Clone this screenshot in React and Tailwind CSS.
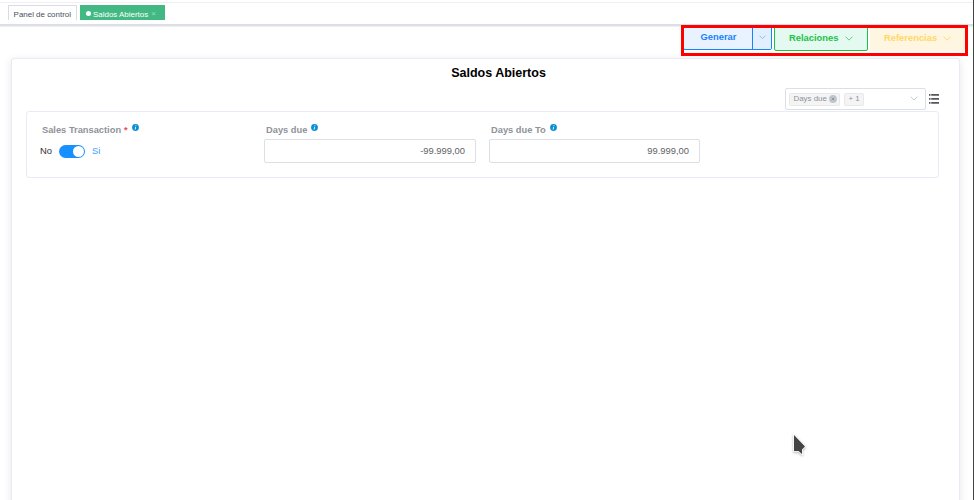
const FONT = 'font-["Liberation_Sans",Arial,sans-serif]';

function Chevron({ className }) {
  return (
    <svg viewBox="0 0 8 5" className={className} fill="none" stroke="currentColor" strokeWidth="0.9">
      <path d="M0.6 0.7 L4 4.1 L7.4 0.7" />
    </svg>
  );
}

function InfoIcon() {
  return (
    <svg viewBox="0 0 7 7" className="h-[7px] w-[7px] shrink-0">
      <circle cx="3.5" cy="3.5" r="3.4" fill="#0a8fd6" />
      <path d="M3.9 1.3 L3.8 2.1 M3.6 2.9 L3.2 5.5" stroke="#fff" strokeWidth="0.9" />
    </svg>
  );
}

function Label({ text, required }) {
  return (
    <div className="flex h-[12px] items-start pl-[2px] text-[9.3px] leading-[13px] font-bold text-[#909399]">
      <span className="whitespace-nowrap">{text}</span>
      {required && <span className="ml-[3px] text-[#f5455c]">*</span>}
      <span className="ml-[4px]">
        <InfoIcon />
      </span>
    </div>
  );
}

function TabsBar() {
  return (
    <div className="flex h-[23px] shrink-0 gap-[3px] border-b-2 border-[#dcdfe6] pt-[2px] pl-[8px] text-[7.95px] leading-[18px] shadow-[0_1px_1px_#f0f0f2]">
      <div className="h-[15px] w-[69px] border border-b-0 border-[#d8dce5] pl-[4.6px] whitespace-nowrap text-[#495060]">
        Panel de control
      </div>
      <div className="flex h-[15px] w-[85px] bg-[#42b983] pl-[6px] whitespace-nowrap text-white">
        <span className="mt-[6px] mr-[2px] h-[5px] w-[5px] rounded-full bg-white" />
        <span className="pt-[1px]">Saldos Abiertos</span>
        <span className="ml-[3px] text-[8px] text-[#a5dfc5]">×</span>
      </div>
    </div>
  );
}

function Actions() {
  return (
    <div className="relative flex h-[33px] shrink-0 pl-[683px] text-[9.4px] font-bold">
      <div className="flex h-[24px] w-[89px] rounded-[2px] border border-[#1682ff] bg-[#e8f3ff] text-[#1682ff]">
        <span className="w-[69px] border-r border-[#1682ff] pl-[1px] text-center leading-[19px]">Generar</span>
        <span className="flex flex-1 items-center justify-center bg-[#e2efff] pb-[2px] text-[#6fb1fb]">
          <Chevron className="h-[4.4px] w-[7px]" />
        </span>
      </div>
      <div className="ml-[2px] flex h-[25px] w-[94px] items-center rounded-[2px] border border-[#1dc149] bg-[#e4f9ef] pl-[14px] text-[#1dc149]">
        Relaciones
        <Chevron className="mb-[1px] ml-[6px] h-[5px] w-[8px] text-[#4fce72]" />
      </div>
      <div className="ml-[2px] flex h-[25px] w-[95px] items-center rounded-[2px] bg-[#fff6e2] pl-[14px] text-[#ffd666]">
        Referencias
        <Chevron className="mb-[1px] ml-[6px] h-[5px] w-[8px]" />
      </div>
      <div className="absolute top-[-1px] left-[681px] h-[31px] w-[287px] border-[3px] border-[#ff0000]" />
    </div>
  );
}

function FieldPicker() {
  return (
    <div className="flex h-[22px] pl-[773px]">
      <div className="flex h-[22px] w-[141px] items-center rounded-[2px] border border-[#dcdfe6] pl-[3px] text-[7.9px] leading-[10px] text-[#909399]">
        <span className="flex h-[13px] w-[51px] items-start rounded-[2px] border border-[#e9e9eb] bg-[#f4f4f5] pl-[3.5px] whitespace-nowrap">
          Days due
          <svg viewBox="0 0 8 8" className="mt-[1.5px] ml-[2px] h-[8px] w-[8px]">
            <circle cx="4" cy="4" r="3.9" fill="#c0c4cc" />
            <path d="M2.7 2.7 L5.3 5.3 M5.3 2.7 L2.7 5.3" stroke="#909399" strokeWidth="0.9" />
          </svg>
        </span>
        <span className="ml-[4px] h-[13px] w-[20px] rounded-[2px] border border-[#e9e9eb] bg-[#f4f4f5] text-center">
          + 1
        </span>
        <Chevron className="mb-[1px] ml-[46px] h-[5px] w-[8px] text-[#c0c4cc]" />
      </div>
      <svg viewBox="0 0 10 10" className="mt-[6px] ml-[3px] h-[10px] w-[10px]" fill="#55575b">
        <path d="M0 0.1h1.5v1.7H0z M0 4.1h1.5v1.7H0z M0 8.1h1.5v1.7H0z M2.2 0.1H10v1.7H2.2z M2.2 4.1H10v1.7H2.2z M2.2 8.1H10v1.7H2.2z" />
      </svg>
    </div>
  );
}

function NumberField({ label, value, className }) {
  return (
    <div className={className}>
      <Label text={label} />
      <div className="mt-[3px] h-[24px] rounded-[2px] border border-[#dcdfe6] pr-[10px] text-right text-[9.4px] leading-[22px] text-[#606266]">
        {value}
      </div>
    </div>
  );
}

export default function App() {
  return (
    <div className={`${FONT} relative flex h-[500px] w-[974px] flex-col overflow-hidden border-r border-[#444] bg-white`}>
      <div className="h-[3px] shrink-0 border-b border-[#f0f0f2]" />
      <TabsBar />
      <Actions />
      <main className="mt-[-1px] ml-[11px] h-[460px] w-[949px] shrink-0 rounded-[3px] border border-[#e6ebf5] bg-white shadow-[0_2px_9px_rgba(0,0,0,0.1)]">
        <h1 className="mt-[6px] ml-[12px] h-[23px] w-[949px] text-center text-[12.5px] leading-[16px] font-bold text-black">
          Saldos Abiertos
        </h1>
        <FieldPicker />
        <section className="mt-[1px] ml-[14px] flex h-[67px] w-[913px] rounded-[3px] border border-[#e6ebf5] pt-[12px]">
          <div className="w-[224px] pl-[13px]">
            <Label text="Sales Transaction" required />
            <div className="mt-[9px] flex h-[13px] items-center text-[9.4px] leading-[13px] text-[#303133]">
              <span className="mt-[-2px]">No</span>
              <span className="mr-[7px] ml-[7px] flex h-[13px] w-[26px] justify-end rounded-full bg-[#1890ff] p-[1px]">
                <span className="h-[11px] w-[11px] rounded-full bg-white" />
              </span>
              <span className="mt-[-2px] text-[#409eff]">Si</span>
            </div>
          </div>
          <NumberField label="Days due" value="-99.999,00" className="ml-[13px] w-[212px]" />
          <NumberField label="Days due To" value="99.999,00" className="ml-[13px] w-[211px]" />
        </section>
      </main>
      <svg viewBox="0 0 18 26" className="absolute top-[431px] left-[790px] h-[26px] w-[18px] drop-shadow-[0_1px_1px_rgba(0,0,0,0.3)]">
        <path d="M4 4 L4 20 L8.5 20 L12 23 L12 18.5 L15 15.5 Z" fill="#444" stroke="#fff" strokeWidth="1.6" paintOrder="stroke" />
      </svg>
    </div>
  );
}
